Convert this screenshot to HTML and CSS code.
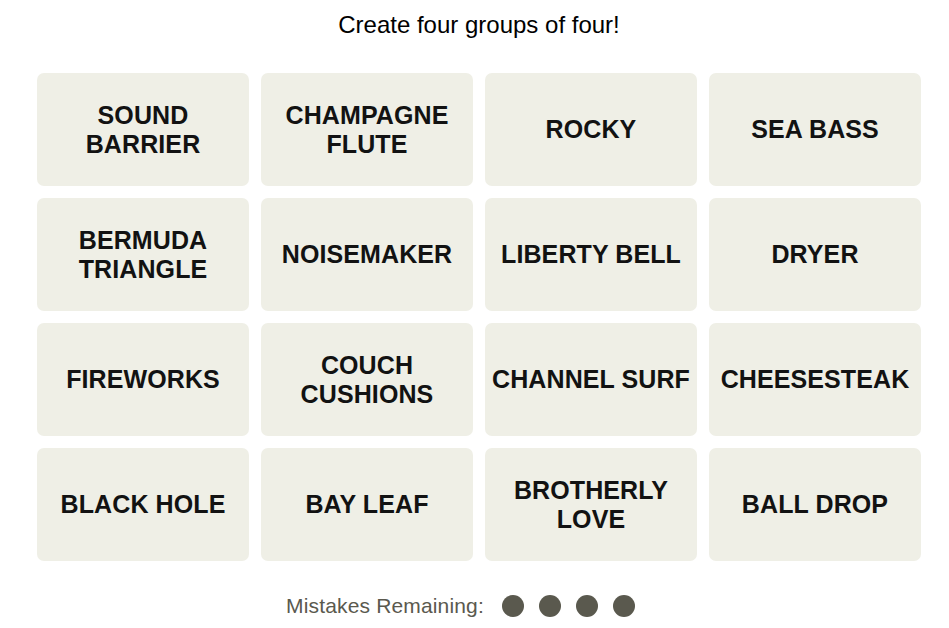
FILE: index.html
```html
<!DOCTYPE html>
<html lang="en">
<head>
<meta charset="utf-8">
<title>Connections</title>
<link rel="stylesheet" href="styles.css">
</head>
<body>
<main class="page">
  <h2 class="prompt">Create four groups of four!</h2>
  <section class="board">
    <button class="tile">SOUND<br>BARRIER</button>
    <button class="tile">CHAMPAGNE<br>FLUTE</button>
    <button class="tile">ROCKY</button>
    <button class="tile">SEA BASS</button>
    <button class="tile">BERMUDA<br>TRIANGLE</button>
    <button class="tile">NOISEMAKER</button>
    <button class="tile">LIBERTY BELL</button>
    <button class="tile">DRYER</button>
    <button class="tile">FIREWORKS</button>
    <button class="tile">COUCH<br>CUSHIONS</button>
    <button class="tile">CHANNEL SURF</button>
    <button class="tile">CHEESESTEAK</button>
    <button class="tile">BLACK HOLE</button>
    <button class="tile">BAY LEAF</button>
    <button class="tile">BROTHERLY<br>LOVE</button>
    <button class="tile">BALL DROP</button>
  </section>
  <div class="mistakes">
    <span class="mistakes-label">Mistakes Remaining:</span>
    <span class="dots">
      <span class="dot"></span>
      <span class="dot"></span>
      <span class="dot"></span>
      <span class="dot"></span>
    </span>
  </div>
</main>
</body>
</html>
```

FILE: styles.css
```css
html, body {
  margin: 0;
  padding: 0;
  background: #ffffff;
}

body {
  font-family: "Liberation Sans", Arial, sans-serif;
  color: #000000;
}

.page {
  padding: 10px 28px 0 37px;
  display: flex;
  flex-direction: column;
  align-items: stretch;
}

.prompt {
  margin: 0;
  font-size: 24px;
  font-weight: 400;
  line-height: 30px;
  text-align: center;
}

.board {
  margin-top: 33px;
  display: grid;
  grid-template-columns: repeat(4, 212px);
  grid-auto-rows: 113px;
  column-gap: 12px;
  row-gap: 12px;
}

.tile {
  border: none;
  margin: 0;
  padding: 0;
  background: #efefe6;
  border-radius: 7px;
  font-family: "Liberation Sans", Arial, sans-serif;
  font-weight: 700;
  font-size: 25px;
  line-height: 28.5px;
  letter-spacing: 0.1px;
  color: #121212;
  text-align: center;
  display: flex;
  align-items: center;
  justify-content: center;
}

.mistakes {
  margin-top: 33px;
  display: flex;
  justify-content: center;
  align-items: center;
  gap: 18px;
  height: 24px;
}

.mistakes-label {
  font-size: 21px;
  line-height: 24px;
  letter-spacing: 0.15px;
  color: #5a594e;
}

.dots {
  display: flex;
  gap: 14.5px;
  width: 170px;
}

.dot {
  width: 22.5px;
  height: 22.5px;
  border-radius: 50%;
  background: #5a594e;
}
```
